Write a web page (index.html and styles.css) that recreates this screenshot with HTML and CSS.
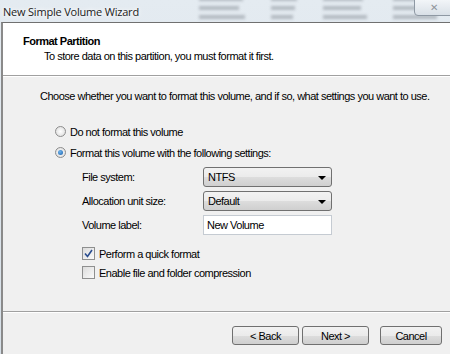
FILE: index.html
```html
<!DOCTYPE html>
<html lang="en">
<head>
    <meta charset="UTF-8">
    <title>New Simple Volume Wizard</title>
    <link rel="stylesheet" href="styles.css">
</head>
<body>
    <div class="titlebar">
        <span class="title">New Simple Volume Wizard</span>
        <div class="behind">
            <span class="blur-col"><i style="width:44px"></i><i style="width:40px"></i><i style="width:46px"></i></span>
            <span class="blur-col"><i style="width:26px"></i><i style="width:24px"></i><i style="width:22px"></i></span>
            <span class="blur-col"><i style="width:40px"></i><i style="width:38px"></i><i style="width:44px"></i></span>
            <span class="blur-col"><i style="width:34px"></i><i style="width:36px"></i><i style="width:44px"></i></span>
        </div>
        <div class="close-btn">&#x2715;</div>
    </div>

    <div class="window">
        <div class="header">
            <div class="header-title">Format Partition</div>
            <div class="header-sub">To store data on this partition, you must format it first.</div>
        </div>

        <div class="content">
            <p class="intro">Choose whether you want to format this volume, and if so, what settings you want to use.</p>

            <label class="radio-row">
                <span class="radio"></span>
                Do not format this volume
            </label>
            <label class="radio-row">
                <span class="radio checked"></span>
                Format this volume with the following settings:
            </label>

            <div class="settings">
                <div class="field">
                    <span class="field-label">File system:</span>
                    <div class="combo">NTFS<span class="arrow"></span></div>
                </div>
                <div class="field">
                    <span class="field-label">Allocation unit size:</span>
                    <div class="combo">Default<span class="arrow"></span></div>
                </div>
                <div class="field">
                    <span class="field-label">Volume label:</span>
                    <div class="textbox">New Volume</div>
                </div>

                <label class="check-row">
                    <span class="checkbox checked">
                        <svg width="9" height="9" viewBox="0 0 9 9"><path d="M1 4.5 L3.5 7.5 L8 1" fill="none" stroke="#2a4d8f" stroke-width="1.6"/></svg>
                    </span>
                    Perform a quick format
                </label>
                <label class="check-row">
                    <span class="checkbox"></span>
                    Enable file and folder compression
                </label>
            </div>
        </div>

        <div class="footer">
            <button class="btn">&lt; Back</button>
            <button class="btn">Next &gt;</button>
            <button class="btn cancel">Cancel</button>
        </div>
    </div>
</body>
</html>
```

FILE: styles.css
```css
/* Wizard dialog */
html, body {
    margin: 0;
    width: 450px;
    height: 354px;
    overflow: hidden;
}
body {
    background: linear-gradient(#e4ebf1, #d6dfe7);
    font-family: Tahoma, "Liberation Sans", Arial, sans-serif;
    font-size: 11px;
    letter-spacing: -0.5px;
    color: #000;
}

/* title bar */
.titlebar {
    height: 22px;
    position: relative;
    display: flex;
    align-items: center;
}
.title {
    padding-left: 3px;
    font-family: "Open Sans", "Liberation Sans", sans-serif;
    font-size: 11px;
    letter-spacing: -0.2px;
    color: #1a1a1a;
    text-shadow: 0 0 6px #fff, 0 0 3px #fff;
}
.behind {
    display: flex;
    gap: 26px;
    margin-left: 60px;
    margin-top: -6px;
    filter: blur(1.4px);
}
.blur-col {
    display: flex;
    flex-direction: column;
    gap: 5px;
}
.blur-col i {
    display: block;
    height: 4px;
    background: #b3bac1;
}
.close-btn {
    position: absolute;
    right: -4px;
    top: -1px;
    width: 38px;
    height: 15px;
    border: 1px solid #8e98a3;
    border-radius: 0 0 0 4px;
    background: linear-gradient(#f2f5f8, #d9e0e7);
    color: #8f959b;
    font-size: 10px;
    text-align: center;
    line-height: 15px;
}

/* dialog frame */
.window {
    margin-left: 1px;
    height: 332px;
    box-sizing: border-box;
    border-top: 1px solid #707070;
    border-left: 2px solid #8a8a8a;
    background: #f0f0f0;
    display: flex;
    flex-direction: column;
}
.header {
    background: #fff;
    height: 52px;
    flex-shrink: 0;
    border-bottom: 1px solid #a0a0a0;
    box-shadow: 0 1px 0 #fff;
    padding-left: 20px;
}
.header-title {
    font-weight: bold;
    margin-top: 12px;
}
.header-sub {
    margin-top: 3px;
    padding-left: 21px;
}

.content {
    flex: 1;
    padding-left: 37px;
}
.intro {
    margin: 14px 0 23px;
    white-space: nowrap;
}
.radio-row, .check-row {
    display: flex;
    align-items: center;
    gap: 4px;
    height: 13px;
    margin-bottom: 8px;
}
.radio-row {
    padding-left: 15px;
}
.radio {
    width: 11px;
    height: 11px;
    border-radius: 50%;
    border: 1px solid #8d8d8d;
    background: radial-gradient(#ffffff, #d8d8d8);
    box-sizing: border-box;
    position: relative;
}
.radio.checked::after {
    content: "";
    position: absolute;
    left: 2px;
    top: 2px;
    width: 5px;
    height: 5px;
    border-radius: 50%;
    background: radial-gradient(circle at 40% 35%, #6fb5ee, #1b5ea8);
}

.settings {
    padding-left: 42px;
    margin-top: 6px;
}
.field {
    display: flex;
    align-items: center;
    height: 20px;
    margin-bottom: 4px;
}
.field-label {
    width: 121px;
}
.combo {
    width: 129px;
    height: 20px;
    box-sizing: border-box;
    border: 1px solid #707070;
    border-radius: 3px;
    background: linear-gradient(#f2f2f2 0%, #ebebeb 50%, #dddddd 51%, #cfcfcf 100%);
    padding-left: 4px;
    display: flex;
    align-items: center;
    position: relative;
}
.arrow {
    position: absolute;
    right: 5px;
    top: 8px;
    border-left: 4px solid transparent;
    border-right: 4px solid transparent;
    border-top: 4px solid #000;
}
.textbox {
    width: 129px;
    height: 20px;
    box-sizing: border-box;
    border: 1px solid #c5cbd2;
    background: #fff;
    padding-left: 3px;
    display: flex;
    align-items: center;
}

.check-row {
    margin-top: 12px;
    margin-bottom: 0;
}
.check-row + .check-row {
    margin-top: 6px;
}
.checkbox {
    width: 13px;
    height: 13px;
    box-sizing: border-box;
    border: 1px solid #8e8f8f;
    background: linear-gradient(135deg, #dcdcdc, #fafafa);
    display: flex;
    align-items: center;
    justify-content: center;
}

.footer {
    height: 43px;
    box-sizing: border-box;
    border-top: 1px solid #a0a0a0;
    box-shadow: inset 0 1px 0 #fff;
    display: flex;
    justify-content: flex-end;
    align-items: flex-start;
    padding: 14px 8px 0 0;
    flex-shrink: 0;
}
.btn {
    width: 67px;
    height: 19px;
    margin-left: 3px;
    border: 1px solid #707070;
    border-radius: 3px;
    background: linear-gradient(#f2f2f2 0%, #ebebeb 50%, #dddddd 51%, #cfcfcf 100%);
    font-family: inherit;
    font-size: 11px;
    letter-spacing: -0.5px;
    padding: 0;
}
.btn.cancel {
    margin-left: 11px;
    width: 62px;
}
```
